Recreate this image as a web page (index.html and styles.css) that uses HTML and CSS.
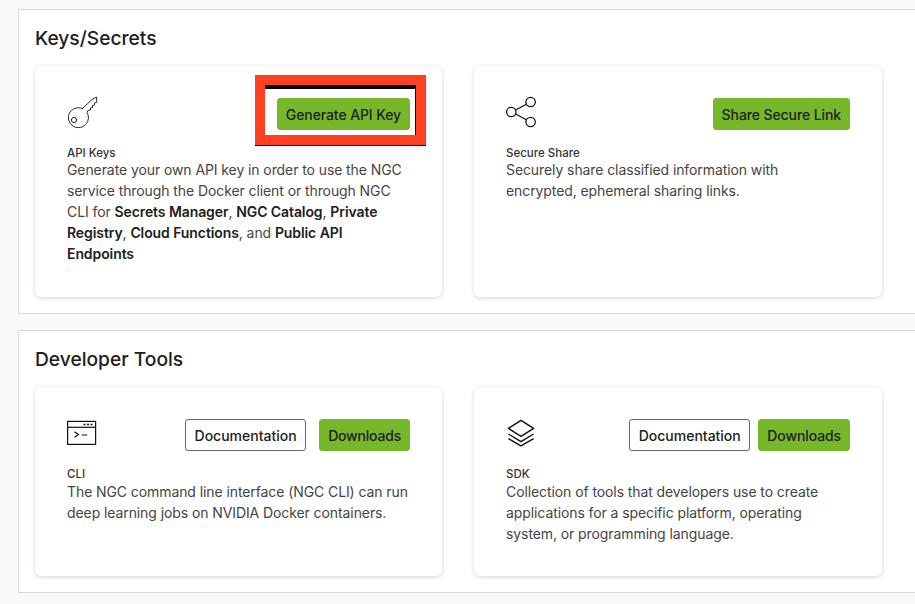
FILE: index.html
```html
<!DOCTYPE html>
<html lang="en">
<head>
<meta charset="utf-8">
<title>Setup</title>
<link rel="stylesheet" href="styles.css">
</head>
<body>
<main class="page">
  <section class="panel panel-keys">
    <h2 class="panel-title">Keys/Secrets</h2>
    <div class="cards">
      <article class="card">
        <div class="card-head">
          <svg class="icon" viewBox="0 0 32 32" fill="none" stroke="#111" stroke-width="0.9" stroke-linejoin="round" stroke-linecap="round">
            <path d="M15.5 10.5 L25 1.5 L29.7 -1 V4.3 L27.5 5 V7 L25.5 7.5 V9.5 L23.5 10 V12 L21 12.5 L20 14.5 A10 10 0 1 1 15.5 10.5 Z"/>
            <circle cx="7" cy="22" r="2.6"/>
          </svg>
          <div class="actions">
            <span class="highlight"><button class="btn btn-primary" type="button">Generate API Key</button></span>
          </div>
        </div>
        <h3 class="card-label">API Keys</h3>
        <p class="card-text">Generate your own API key in order to use the NGC service through the Docker client or through NGC CLI for <b>Secrets Manager</b>, <b>NGC Catalog</b>, <b>Private Registry</b>, <b>Cloud Functions</b>, and <b>Public API Endpoints</b></p>
      </article>
      <article class="card">
        <div class="card-head">
          <svg class="icon" viewBox="0 0 32 32" fill="none" stroke="#111" stroke-width="1.3">
            <circle cx="5.3" cy="14" r="4.7"/>
            <circle cx="24.6" cy="4" r="4.7"/>
            <circle cx="24.6" cy="24" r="4.7"/>
            <path d="M9.6 12 L20.4 6.2 M9.6 16 L20.4 21.8"/>
          </svg>
          <div class="actions">
            <button class="btn btn-primary" type="button">Share Secure Link</button>
          </div>
        </div>
        <h3 class="card-label">Secure Share</h3>
        <p class="card-text">Securely share classified information with encrypted, ephemeral sharing links.</p>
      </article>
    </div>
  </section>
  <section class="panel">
    <h2 class="panel-title">Developer Tools</h2>
    <div class="cards">
      <article class="card">
        <div class="card-head">
          <svg class="icon" viewBox="0 0 32 32" fill="none" stroke="#111" stroke-width="1.2">
            <rect x="0.6" y="2.4" width="28" height="23"/>
            <path d="M0.6 8.3 H28.6"/>
            <path d="M7.5 12.7 L11.5 15.5 L7.5 18.3 M14.7 16 H20.3"/>
            <path d="M16.5 5.5 H18.5 M20 5.5 H22 M23.5 5.5 H25.5" stroke-width="1.6"/>
          </svg>
          <div class="actions actions-wide">
            <button class="btn btn-outline" type="button">Documentation</button>
            <button class="btn btn-primary btn-narrow" type="button">Downloads</button>
          </div>
        </div>
        <h3 class="card-label">CLI</h3>
        <p class="card-text">The NGC command line interface (NGC CLI) can run deep learning jobs on NVIDIA Docker containers.</p>
      </article>
      <article class="card">
        <div class="card-head">
          <svg class="icon" viewBox="0 0 32 32" fill="none" stroke="#111" stroke-width="1.4" stroke-linejoin="round">
            <path d="M15 1.4 L27.6 9.3 L15 17.4 L2.4 9.3 Z"/>
            <path d="M2.4 15 L15 22.7 L27.6 15"/>
            <path d="M2.4 19.6 L15 26.8 L27.6 19.6"/>
          </svg>
          <div class="actions">
            <button class="btn btn-outline" type="button">Documentation</button>
            <button class="btn btn-primary" type="button">Downloads</button>
          </div>
        </div>
        <h3 class="card-label">SDK</h3>
        <p class="card-text">Collection of tools that developers use to create applications for a specific platform, operating system, or programming language.</p>
      </article>
    </div>
  </section>
</main>
</body>
</html>
```
FILE: styles.css
```css
*, *::before { box-sizing: border-box; }
html, body { margin: 0; height: 100%; }
body {
  background: #f9f9f9;
  color: #202020;
  font-family: Inter, "Liberation Sans", sans-serif;
  overflow: hidden;
}
.page {
  display: flex;
  flex-direction: column;
  gap: 16px;
  width: 915px;
  padding: 9px 0 0 18px;
}
.panel {
  background: #fff;
  border: 1px solid #d8d8d8;
  border-right: 0;
  padding: 12px 0 16px 16px;
  overflow: hidden;
}
.panel-title {
  margin: 0 0 12px;
  font-size: 19.2px;
  line-height: 32px;
  font-weight: 500;
  color: #202020;
}
.cards {
  display: grid;
  grid-template-columns: 407px 408px;
  gap: 32px;
  padding-bottom: 4px;
  margin-bottom: -4px;
}
.card {
  background: #fff;
  border-radius: 6px;
  padding: 32px;
  box-shadow: 0 1px 4px rgba(0, 0, 0, 0.18);
}
.panel-keys .card { padding-bottom: 33px; }
.card-head {
  display: flex;
  align-items: center;
  justify-content: space-between;
  height: 32px;
  margin-bottom: 16px;
}
.icon { width: 32px; height: 32px; display: block; overflow: visible; }
.actions { display: flex; gap: 8px; }
.actions-wide { gap: 13px; }
.btn {
  display: block;
  height: 32px;
  padding: 0 8px;
  border-radius: 3px;
  font-family: inherit;
  font-size: 14px;
  font-weight: 450;
  color: #202020;
  white-space: nowrap;
}
.btn-primary { background: #76b82a; border: 1px solid #76b82a; letter-spacing: -0.1px; }
.btn-narrow { letter-spacing: -0.2px; }
.btn-outline { background: #fff; border: 1px solid #666; padding: 0 8.5px; }
.highlight { position: relative; display: block; }
.highlight::before {
  content: "";
  position: absolute;
  left: -22px;
  top: -23px;
  width: 171px;
  height: 70px;
  border: 10px solid #ff4122;
  box-shadow: inset 0 4px 0 #000, inset -1px 0 0 #000, 0 1px 0 #000;
}
.card-label {
  margin: 0;
  font-size: 11.5px;
  line-height: 14px;
  font-weight: 500;
  color: #333;
}
.panel-keys .card-label { margin-bottom: -1px; }
.card-text {
  margin: 0;
  font-size: 14px;
  line-height: 21px;
  letter-spacing: -0.09px;
  color: #444;
}
.card-text b { font-weight: 600; color: #202020; }
```
